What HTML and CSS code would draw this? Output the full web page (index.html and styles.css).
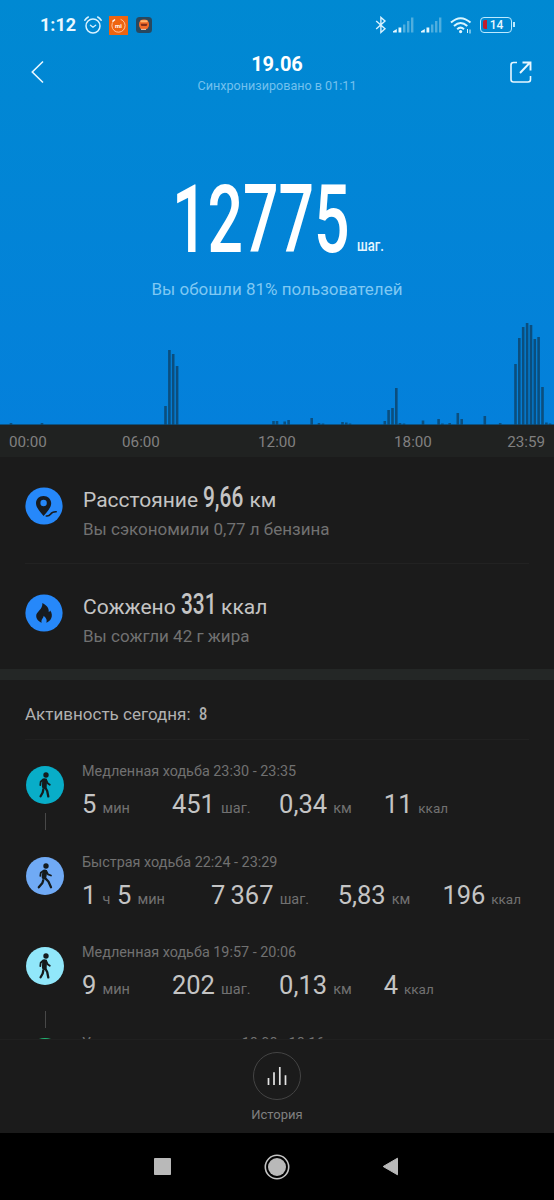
FILE: index.html
```html
<!DOCTYPE html>
<html lang="ru">

<head>
    <meta charset="UTF-8">
    <meta name="viewport" content="width=device-width, initial-scale=1.0">
    <title>Шаги</title>
    <link rel="stylesheet" href="styles.css">
</head>

<body>
    <!-- shared walking figures -->
    <svg class="defs" width="0" height="0">
        <symbol id="walk" viewBox="0 0 38 38">
            <circle cx="20" cy="9" r="2.7" fill="#151b1d" />
            <g fill="none" stroke="#151b1d" stroke-linecap="round" stroke-linejoin="round">
                <path d="M18.6 14.6L18.3 20.6" stroke-width="4.8" />
                <path d="M17.2 13.5L14.7 15.7L14.3 19.2M20 13.5L21.6 17.2L23.8 18.8" stroke-width="1.8" />
                <path d="M19 21L21.2 25L22.3 30.4M17.3 23.5L16.7 26.5L14.6 30.2" stroke-width="2.3" />
            </g>
        </symbol>
        <symbol id="walkfast" viewBox="0 0 38 38">
            <circle cx="20" cy="9" r="2.7" fill="#151b1d" />
            <g fill="none" stroke="#151b1d" stroke-linecap="round" stroke-linejoin="round">
                <path d="M18.8 14.8L18 20" stroke-width="4.8" />
                <path d="M17.6 13.6L14.8 15.7L14.3 18.8M20.2 13.9L22 17.3L25 18.5" stroke-width="1.8" />
                <path d="M18.6 20.6L22.4 24.5L25 30.2M17.2 23.3L16.4 26L12.8 30.3" stroke-width="2.3" />
            </g>
        </symbol>
    </svg>

    <div class="hero">
        <div class="statusbar">
            <span class="clock">1:12</span>
            <svg class="alarm" width="18" height="18" viewBox="0 0 18 18" fill="none" stroke="#d9f2ff" stroke-linecap="round">
                <circle cx="9" cy="10" r="7" stroke-width="1.5" />
                <path d="M.9 4.2Q2.2 2 4.3 1M17.1 4.2Q15.8 2 13.7 1" stroke-width="1.6" />
                <path d="M6.4 9.2L9 11.2L11.7 9.2" stroke-width="1.3" />
            </svg>
            <svg class="app" width="19" height="19" viewBox="0 0 19 19">
                <rect width="19" height="19" fill="#ee6410" />
                <circle cx="9.5" cy="9.6" r="6.6" fill="none" stroke="#ffc39a" stroke-width=".9" stroke-dasharray="32 9" transform="rotate(-70 9.5 9.6)" />
                <path d="M3.4 5.6L6 3.5" stroke="#fff" stroke-width="1.4" />
                <text x="9.5" y="11.6" class="apptext">mi</text>
            </svg>
            <svg class="app2" width="16" height="16" viewBox="0 0 16 16">
                <rect width="16" height="16" rx="3.5" fill="#28485f" />
                <rect x="3" y="2.4" width="10" height="10.2" rx="4.6" fill="#f36b27" />
                <rect x="4.3" y="3.2" width="7.4" height="2" rx="1" fill="#ffb56e" />
                <path d="M4.5 6.7H11.5L10.6 8.9H5.4Z" fill="#82301c" />
                <path d="M5 12.4H10" stroke="#f7d6c2" stroke-width=".9" />
            </svg>
            <svg class="bt" width="12" height="18" viewBox="0 0 12 18" fill="none" stroke="#d9f2ff" stroke-width="1.4">
                <path d="M1.2 4.9L10 12.7L5.9 16.4V1.4L10 5.1L1.2 12.9" />
            </svg>
            <svg class="signal" width="21" height="16" viewBox="0 0 21 16">
                <path d="M0 15.5V14.3L3.8 12V15.5ZM5.5 15.5V10.5H8.3V15.5Z" fill="#e4f7ff" />
                <path d="M10 7.5H12.4V15.5H10ZM14 4H16.4V15.5H14ZM18 .5H20.4V15.5H18Z" fill="#4faede" />
            </svg>
            <svg class="signal two" width="21" height="16" viewBox="0 0 21 16">
                <path d="M0 15.5V14.3L3.8 12V15.5ZM5.5 15.5V10.5H8.3V15.5Z" fill="#e4f7ff" />
                <path d="M10 7.5H12.4V15.5H10ZM14 4H16.4V15.5H14ZM18 .5H20.4V15.5H18Z" fill="#4faede" />
            </svg>
            <svg class="wifi" width="22" height="17" viewBox="0 0 22 17" fill="none" stroke="#d9f6ff" stroke-width="2">
                <path d="M1 5.6Q10.5 -3.2 20.5 5.6M4 9Q10.5 3 17.3 9M7.2 12.2Q10.5 9 14 12.2" />
                <circle cx="10.6" cy="14.6" r="1.6" fill="#e4f7ff" stroke="none" />
                <path d="M17.5 12V16M20 12.5V16.5" stroke-width="1" />
            </svg>
            <div class="battery"><i class="charge"></i>14</div>
        </div>

        <div class="titlebar">
            <svg class="back" width="13" height="24" viewBox="0 0 13 24" fill="none" stroke="#e8f7ff" stroke-width="1.6">
                <path d="M12 1.5L1.3 12L12 22.5" />
            </svg>
            <div class="titles">
                <h1>19.06</h1>
                <p>Синхронизировано в 01:11</p>
            </div>
            <svg class="share" width="22" height="22" viewBox="0 0 22 22" fill="none" stroke="#e8f7ff" stroke-width="1.6">
                <path d="M7 1.5H3.5Q1 1.5 1 4V18.5Q1 21 3.5 21H18Q20.5 21 20.5 18.5V15" />
                <path d="M10 12L20 1.5M12.5 1.5H20.5V9.5" stroke-width="1.9" />
            </svg>
        </div>

        <div class="steps">
            <span class="big"><span>12775</span></span>
            <span class="unit"><span>шаг.</span></span>
        </div>
        <p class="rank">Вы обошли 81% пользователей</p>

        <svg class="chart" width="554" height="108" viewBox="0 0 554 108">
            <path fill="none" stroke="#0b4e7e" stroke-width="2.6" d="M11 108v-2M42 108v-2
                M165.5 108v-19M169.4 108v-75M173.2 108v-71M177.1 108v-59
                M273.5 108v-4M277 108v-4M284.7 108v-3.5M288.6 108v-5M311.7 108v-7M319 108v-2M323 108v-1.5
                M342.5 108v-3M346.3 108v-2.5M350 108v-1.5
                M384.8 108v-4M388.6 108v-15M392.5 108v-17M396.3 108v-37M400 108v-2M404 108v-1.5
                M423 108v-4.5M438.6 108v-6M442.4 108v-1.5M449.7 108v-2M457.8 108v-12M461.7 108v-6
                M484.8 108v-9M500.2 108v-2
                M515.5 108v-61M519.3 108v-87M523.2 108v-98M527.1 108v-102M531 108v-100M534.8 108v-86M538.6 108v-88M542.5 108v-38M546.4 108v-2.5M550 108v-1.5" />
            <path d="M0 107.6H554" stroke="#10405f" stroke-width=".8" />
        </svg>
    </div>

    <div class="axis">
        <span>00:00</span><span>06:00</span><span>12:00</span><span>18:00</span><span>23:59</span>
    </div>

    <div class="summary">
        <div class="row">
            <svg class="icon" width="38" height="38" viewBox="0 0 38 38">
                <circle cx="19" cy="19" r="18.6" fill="#2688fa" />
                <path fill="#171b20" fill-rule="evenodd" d="M18.5 9C14 9 11 12.2 11 16.2C11 20.5 15 24.5 18.6 29C22.3 24.5 26.2 20.5 26.2 16.2C26.2 12.2 23 9 18.5 9ZM18.6 12.8A3.2 3.2 0 1 1 18.6 19.2A3.2 3.2 0 1 1 18.6 12.8Z" />
                <path d="M21.3 29Q24 29.4 25.7 27Q27 24.6 31.2 24.7" fill="none" stroke="#171b20" stroke-width="1.6" stroke-linecap="round" />
            </svg>
            <div class="info">
                <h2>Расстояние <span class="num w4"><span>9,66</span></span> км</h2>
                <p>Вы сэкономили 0,77 л бензина</p>
            </div>
        </div>
        <div class="row second">
            <svg class="icon" width="38" height="38" viewBox="0 0 38 38">
                <circle cx="19" cy="19" r="18.6" fill="#2688fa" />
                <path fill="#171b20" d="M17.4 9C22 11.2 24.2 14.8 23.7 18Q24.8 17.7 25.2 16.4C27.2 19.2 27.3 22 26.1 24.6C25.2 26.6 23.4 28 21.3 28.7C22.3 26.5 21.5 24 18.6 21.8C18.9 24 15.6 25.3 16.7 28.7C13.4 27.7 11.2 25 11.2 21.8C11.2 17.6 17.8 15.7 17.4 9Z" />
            </svg>
            <div class="info">
                <h2>Сожжено <span class="num w3"><span>331</span></span> ккал</h2>
                <p>Вы сожгли 42 г жира</p>
            </div>
        </div>
    </div>

    <div class="activity">
        <h3>Активность сегодня: <span class="num w1"><span>8</span></span></h3>
        <div class="item">
            <div class="rail dash"><svg class="dot cyan" width="38" height="38"><use href="#walk" /></svg></div>
            <div class="detail">
                <p>Медленная ходьба 23:30 - 23:35</p>
                <div class="stats">
                    <span class="time"><b>5</b> мин</span>
                    <span class="step"><b>451</b> шаг.</span>
                    <span class="dist"><b>0,34</b> км</span>
                    <span class="kcal"><b>11</b> ккал</span>
                </div>
            </div>
        </div>
        <div class="item">
            <div class="rail"><svg class="dot blue" width="38" height="38"><use href="#walkfast" /></svg></div>
            <div class="detail">
                <p>Быстрая ходьба 22:24 - 23:29</p>
                <div class="stats">
                    <span class="time long"><b>1</b> ч <b>5</b> мин</span>
                    <span class="step"><b>7 367</b> шаг.</span>
                    <span class="dist"><b>5,83</b> км</span>
                    <span class="kcal"><b>196</b> ккал</span>
                </div>
            </div>
        </div>
        <div class="item">
            <div class="rail dash low"><svg class="dot light" width="38" height="38"><use href="#walk" /></svg></div>
            <div class="detail">
                <p>Медленная ходьба 19:57 - 20:06</p>
                <div class="stats">
                    <span class="time"><b>9</b> мин</span>
                    <span class="step"><b>202</b> шаг.</span>
                    <span class="dist"><b>0,13</b> км</span>
                    <span class="kcal"><b>4</b> ккал</span>
                </div>
            </div>
        </div>
        <div class="item">
            <div class="rail"><svg class="dot green" width="38" height="38"><use href="#walk" /></svg></div>
            <div class="detail">
                <p>Умеренная активность 18:08 - 18:16</p>
            </div>
        </div>
    </div>

    <div class="history">
        <div class="circle">
            <svg width="20" height="20" viewBox="0 0 20 20" stroke="#e3e3e3" stroke-width="1.7">
                <path d="M1.5 19V12M7 19V6.3M12.8 19V1M18.5 19V9.3" />
            </svg>
        </div>
        <span>История</span>
    </div>

    <div class="navbar">
        <svg width="17" height="17" viewBox="0 0 17 17"><rect width="17" height="17" rx=".8" fill="#b9b9b9" /></svg>
        <svg width="26" height="26" viewBox="0 0 26 26"><circle cx="13" cy="13" r="11.7" fill="none" stroke="#c4c4c4" stroke-width="1.6" /><circle cx="13" cy="13" r="9" fill="#b9b9b9" /></svg>
        <svg width="17" height="19" viewBox="0 0 17 19"><path d="M15.5 1.2V17.8L1.2 9.5Z" fill="#b9b9b9" stroke="#b9b9b9" stroke-linejoin="round" /></svg>
    </div>
</body>

</html>
```
FILE: styles.css
```css
* {
    box-sizing: border-box;
    margin: 0;
    padding: 0;
}

body {
    width: 554px;
    height: 1200px;
    overflow: hidden;
    background: #1b1b1b;
    font-family: Roboto, "Noto Sans", sans-serif;
    color: #bdbdbd;
    display: flex;
    flex-direction: column;
}

svg {
    display: block;
    flex: none;
}

.defs {
    position: absolute;
}

.hero {
    height: 425px;
    flex: none;
    background: linear-gradient(#0089d2, #0480db);
    display: flex;
    flex-direction: column;
}

.statusbar {
    height: 50px;
    padding: 0 39px 0 40px;
    display: flex;
    align-items: center;
}

.clock {
    width: 44px;
    font-size: 18px;
    font-weight: 700;
    line-height: 50px;
    color: #e9f8ff;
}

.app {
    margin-left: 7px;
}

.app2 {
    margin-left: 8px;
}

.apptext {
    font-size: 6px;
    font-weight: 700;
    fill: #fff;
    text-anchor: middle;
}

.bt {
    margin-left: auto;
}

.signal {
    margin-left: 6px;
}

.signal.two {
    margin-left: 7px;
}

.wifi {
    margin-left: 8px;
}

.battery {
    position: relative;
    width: 32px;
    height: 16px;
    margin-left: 8px;
    margin-right: 3px;
    border: 1.5px solid #bdeaff;
    border-radius: 4px;
    font-size: 12px;
    font-weight: 500;
    line-height: 15px;
    text-align: center;
    color: #e9f8ff;
    padding-left: 1px;
}

.battery::after {
    content: "";
    position: absolute;
    right: -4px;
    top: 4px;
    width: 2px;
    height: 5px;
    background: #bdeaff;
}

.charge {
    position: absolute;
    left: 1.5px;
    top: 2px;
    width: 4px;
    height: 9px;
    border-radius: 2px 0 0 2px;
    background: #c11a2b;
}

.titlebar {
    height: 50px;
    padding: 0 22px 0 31px;
    display: flex;
    align-items: flex-start;
    justify-content: space-between;
}

.back {
    margin-top: 10px;
}

.share {
    margin-top: 11px;
}

.titles {
    text-align: center;
}

h1 {
    font-size: 20px;
    line-height: 28px;
    font-weight: 700;
    color: #fff;
}

.titles p {
    font-size: 12.6px;
    line-height: 16px;
    color: #73c1ee;
}

.steps {
    height: 170px;
    padding: 65px 0 0 172px;
    display: flex;
}

/* condensed numerals */
.big span,
.unit span,
.num span {
    display: inline-block;
    transform-origin: 0 50%;
}

.big {
    width: 185px;
    font-size: 94px;
    font-weight: 500;
    line-height: 110px;
    color: #fff;
}

.big span {
    transform: scaleX(.665);
}

.unit {
    padding-top: 70px;
    font-size: 17px;
    font-weight: 500;
    line-height: 20px;
    color: #e6f6ff;
}

.unit span {
    transform: scaleX(.77);
}

.rank {
    height: 47px;
    padding-top: 8px;
    text-align: center;
    font-size: 17px;
    line-height: 22px;
    color: #7fc8f3;
}

.chart {
    margin-top: auto;
}

.axis {
    height: 32px;
    flex: none;
    padding: 0 9px;
    background: #202221;
    display: grid;
    grid-template-columns: 64px 136px 136px 136px 64px;
    font-size: 15.2px;
    line-height: 34px;
    text-align: center;
    color: #808080;
}

.axis span:first-child {
    text-align: left;
}

.axis span:last-child {
    text-align: right;
}

.summary {
    height: 212px;
    flex: none;
}

.row {
    height: 106px;
    margin: 0 25px;
    padding-top: 25px;
    display: flex;
}

.second {
    border-top: 1px solid #222;
}

.icon {
    margin-top: 5px;
}

.info {
    margin-left: 20px;
}

h2 {
    height: 33px;
    font-size: 21px;
    line-height: 33px;
    font-weight: 400;
    color: #c4c4c4;
    white-space: nowrap;
}

.num {
    display: inline-block;
    font-size: 29px;
    font-weight: 500;
    line-height: 30px;
}

.num span {
    transform: scaleX(.72);
}

.w4 {
    width: 41px;
}

.w3 {
    width: 35px;
}

.info p {
    font-size: 17px;
    line-height: 28px;
    color: #717171;
}

.activity {
    height: 370px;
    flex: none;
    overflow: hidden;
    border-top: 11px solid #242726;
}

h3 {
    height: 60px;
    margin: 0 25px 19px;
    border-bottom: 1px solid #212121;
    font-size: 17px;
    font-weight: 400;
    line-height: 69px;
    color: #b0b0b0;
}

.w1 {
    margin-left: 4px;
    font-size: 18px;
    line-height: 20px;
}

.num.w1 span {
    transform: scaleX(.8);
}

.item {
    height: 90.5px;
    padding-left: 26px;
    display: flex;
}

.rail {
    width: 38px;
    margin-right: 18px;
    padding-top: 7px;
    display: flex;
    flex-direction: column;
    align-items: center;
}

.dash::after {
    content: "";
    width: 1px;
    height: 17px;
    margin-top: 9px;
    background: #484848;
}

.low::after {
    margin-top: 26px;
}

.dot {
    border-radius: 50%;
}

.cyan {
    background: #08adc8;
}

.blue {
    background: #70aaf5;
}

.light {
    background: #91e7fa;
}

.green {
    background: #22b573;
}

.detail p {
    font-size: 14.4px;
    line-height: 26px;
    color: #717171;
    white-space: nowrap;
}

.stats {
    display: flex;
    font-size: 14.5px;
    line-height: 38px;
    color: #717171;
    white-space: nowrap;
}

.stats b {
    margin-right: 2.5px;
    font-size: 25.5px;
    font-weight: 400;
    word-spacing: -1px;
    color: #c4c4c4;
}

.step {
    margin-left: 42px;
}

.long b + b {
    margin-left: 3px;
}

.long + .step {
    margin-left: 46px;
}

.dist {
    margin-left: 28.5px;
}

.kcal {
    margin-left: 32px;
    font-size: 13.5px;
}

.history {
    height: 94px;
    flex: none;
    padding-top: 12px;
    border-top: 1px solid #202020;
    display: flex;
    flex-direction: column;
    align-items: center;
    font-size: 13px;
    line-height: 29px;
    color: #808080;
}

.circle {
    width: 48px;
    height: 48px;
    border: 1px solid #444;
    border-radius: 50%;
    display: flex;
    align-items: center;
    justify-content: center;
}

.navbar {
    height: 67px;
    flex: none;
    padding: 0 155px 0 154px;
    background: #000;
    display: flex;
    align-items: center;
    justify-content: space-between;
}
```
